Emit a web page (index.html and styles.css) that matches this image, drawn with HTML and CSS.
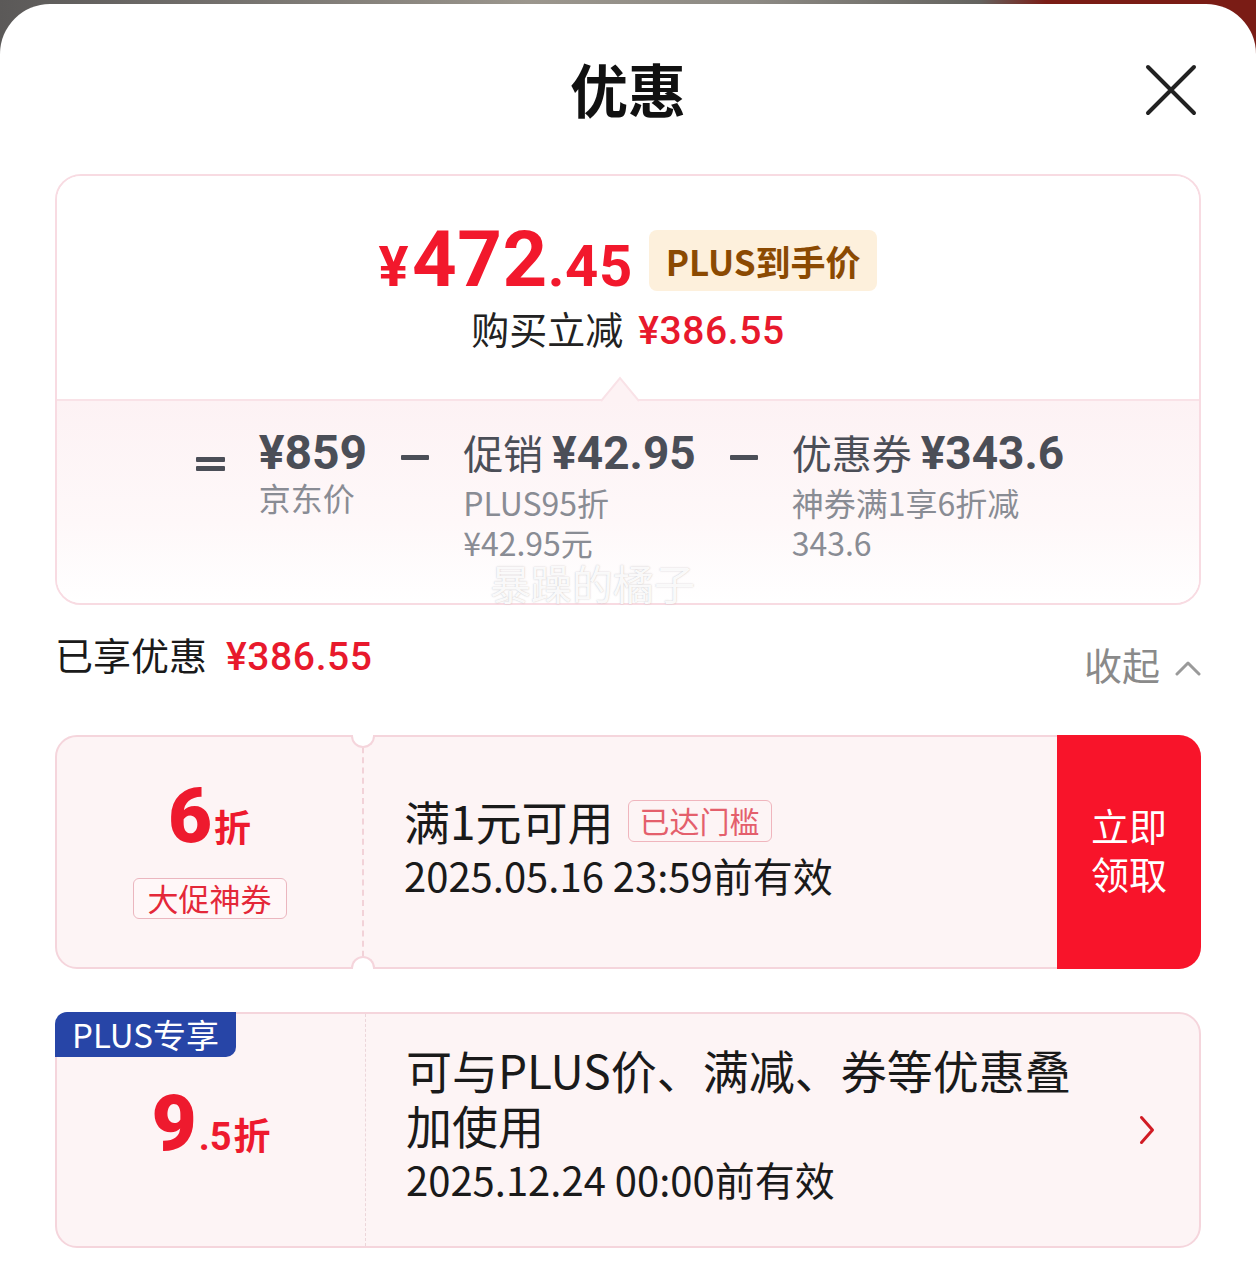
FILE: index.html
```html
<!DOCTYPE html>
<html lang="zh-CN">
<head>
<meta charset="utf-8">
<title>优惠</title>
<link rel="stylesheet" href="styles.css">
</head>
<body>
<div class="sheet">
  <header class="header">
    <span class="spacer"></span>
    <h1 class="title">优惠</h1>
    <button class="close" aria-label="关闭">
      <svg viewBox="0 0 52 52" width="52" height="52"><path d="M3 3 L49 49 M49 3 L3 49" stroke="#222" stroke-width="4" stroke-linecap="round" fill="none"/></svg>
    </button>
  </header>

  <section class="price-card">
    <div class="price-top">
      <div class="price-row">
        <span class="price"><span class="yen">¥</span><span class="int">472</span><span class="dec">.45</span></span>
        <span class="plus-badge">PLUS到手价</span>
      </div>
      <div class="save-row"><span class="save-label">购买立减</span><span class="save-val">¥386.55</span></div>
    </div>
    <div class="price-bottom">
      <svg class="notch" width="38" height="26" viewBox="0 0 38 26"><path d="M0 25 L19 2 L38 25" fill="#fdf2f4" stroke="#f9e2e7" stroke-width="2"/></svg>
      <div class="formula">
        <span class="op op-eq"><i></i><i></i></span>
        <div class="term">
          <div class="term-main"><b class="first-val">¥859</b></div>
          <div class="term-sub first">京东价</div>
        </div>
        <span class="op op-minus"><i></i></span>
        <div class="term">
          <div class="term-main">促销 <b>¥42.95</b></div>
          <div class="term-sub">PLUS95折<br>¥42.95元</div>
        </div>
        <span class="op op-minus"><i></i></span>
        <div class="term">
          <div class="term-main">优惠券 <b>¥343.6</b></div>
          <div class="term-sub">神券满1享6折减<br>343.6</div>
        </div>
      </div>
    </div>
  </section>

  <div class="enjoy-row">
    <div class="enjoy-left"><span>已享优惠</span><span class="enjoy-val">¥386.55</span></div>
    <div class="collapse">
      <span>收起</span>
      <svg width="26" height="16" viewBox="0 0 26 16"><path d="M2 14 L13 3 L24 14" stroke="#9a9a9a" stroke-width="3" fill="none" stroke-linecap="round" stroke-linejoin="round"/></svg>
    </div>
  </div>

  <div class="coupon coupon-one">
    <div class="c-left notched">
      <span class="notch-top"></span><span class="notch-bottom"></span>
      <div class="disc"><span class="disc-num">6</span><span class="disc-unit">折</span></div>
      <span class="c-tag">大促神券</span>
    </div>
    <div class="c-main">
      <div class="c-title">满1元可用<span class="c-badge">已达门槛</span></div>
      <div class="c-date">2025.05.16 23:59前有效</div>
    </div>
    <div class="c-btn">立即<br>领取</div>
  </div>

  <div class="coupon coupon-two">
    <span class="plus-tag">PLUS专享</span>
    <div class="c-left plain">
      <div class="disc"><span class="disc-num big">9</span><span class="disc-small">.5</span><span class="disc-unit">折</span></div>
    </div>
    <div class="c-main with-arrow">
      <div class="c-text">
        <div class="c-title">可与PLUS价、满减、券等优惠叠<br>加使用</div>
        <div class="c-date">2025.12.24 00:00前有效</div>
      </div>
      <svg class="arrow" width="16" height="30" viewBox="0 0 16 30"><path d="M2.5 2.5 L13.5 15 L2.5 27.5" stroke="#d11b24" stroke-width="3" fill="none" stroke-linecap="round" stroke-linejoin="round"/></svg>
    </div>
  </div>

  <span class="watermark">暴躁的橘子</span>
</div>
</body>
</html>
```

FILE: styles.css
```css
html, body {
  margin: 0;
  padding: 0;
}

body {
  background: linear-gradient(90deg, #5b5958 0%, #6f6c69 15%, #9b968d 42%, #8d8a84 60%, #64635f 78%, #7a1c15 83.3%, #7a1c15 100%);
  font-family: "Noto Sans CJK SC", "Noto Sans", sans-serif;
  color: #1a1a1a;
}

.sheet {
  position: relative;
  margin-top: 4px;
  min-height: 1268px;
  box-sizing: border-box;
  padding: 0 55px;
  background: #fff;
  border-radius: 50px 50px 0 0;
}

/* header */
.header {
  display: grid;
  grid-template-columns: 1fr auto 1fr;
  align-items: center;
  height: 170px;
}

.title {
  margin: 0 0 2px;
  font-size: 58px;
  font-weight: 700;
  line-height: 1;
  color: #111;
}

.close {
  justify-self: end;
  width: 52px;
  height: 52px;
  margin: 2px 4px 0 0;
  padding: 0;
  border: 0;
  background: none;
}

.close svg {
  display: block;
}

/* price card */
.price-card {
  border: 2px solid #f8dbe2;
  border-radius: 26px;
  overflow: hidden;
}

.price-top {
  display: flex;
  flex-direction: column;
  align-items: center;
  padding: 44px 0 44px;
  background: #fff;
}

.price-row {
  display: flex;
  align-items: center;
  gap: 16px;
  height: 80px;
}

.price {
  display: flex;
  align-items: baseline;
  font-family: Roboto, "Liberation Sans", sans-serif;
  font-weight: 700;
  color: #f2182c;
  line-height: 1;
  letter-spacing: 0.5px;
}

.yen {
  font-size: 56px;
  margin-right: 3px;
}

.int {
  font-size: 78px;
}

.dec {
  font-size: 58px;
}

.plus-badge {
  height: 61px;
  padding: 0 17px;
  border-radius: 8px;
  background: #fdf0dc;
  color: #8b4a02;
  font-size: 35px;
  font-weight: 700;
  line-height: 61px;
}

.save-row {
  display: flex;
  align-items: baseline;
  gap: 15px;
  margin-top: 4px;
  line-height: 48px;
}

.save-label {
  font-size: 38px;
  color: #222;
}

.save-val {
  font-family: Roboto, "Liberation Sans", sans-serif;
  font-size: 39px;
  font-weight: 500;
  letter-spacing: 0.6px;
  color: #e8192c;
}

.price-bottom {
  position: relative;
  border-top: 2px solid #f9e2e7;
  background: linear-gradient(180deg, #fdf2f4 0%, #fef8f9 60%, #ffffff 100%);
  padding: 28px 0 41px;
}

.notch {
  position: absolute;
  left: calc(50% - 27px);
  top: -25px;
  display: block;
}

.formula {
  display: flex;
  justify-content: center;
  align-items: flex-start;
  gap: 34px;
  color: #4b4e57;
  padding-left: 4px;
}

.op {
  display: flex;
  flex-direction: column;
  justify-content: center;
  gap: 4px;
  height: 46px;
}

.op i {
  display: block;
  height: 5px;
  background: #4b4e57;
  border-radius: 1px;
}

.op-eq {
  width: 29px;
  margin-top: 12px;
}

.op-minus {
  width: 28px;
  margin-top: 5px;
}

.term-main {
  font-size: 40px;
  line-height: 46px;
  white-space: nowrap;
  color: #4b4e57;
}

.term-main b {
  font-family: Roboto, "Liberation Sans", sans-serif;
  font-size: 46px;
  font-weight: 700;
}

.term-main b.first-val {
  font-size: 48px;
}

.term-sub {
  margin-top: 6px;
  font-size: 32px;
  line-height: 40px;
  color: #898c94;
  white-space: nowrap;
}

.term-sub.first {
  margin-top: 0;
  line-height: 42px;
}

/* enjoyed row */
.enjoy-row {
  display: flex;
  justify-content: space-between;
  align-items: flex-start;
  padding-top: 24px;
  margin-bottom: 46px;
}

.enjoy-left {
  display: flex;
  align-items: baseline;
  gap: 19px;
  font-size: 38px;
  line-height: 50px;
  color: #1a1a1a;
}

.enjoy-val {
  font-family: Roboto, "Liberation Sans", sans-serif;
  font-weight: 500;
  font-size: 39px;
  letter-spacing: 0.6px;
  color: #e8192c;
}

.collapse {
  display: flex;
  align-items: center;
  gap: 15px;
  padding-top: 10px;
  font-size: 38px;
  line-height: 50px;
  color: #8a8a8a;
}

.collapse svg {
  display: block;
  margin-top: 8px;
}

/* coupons */
.coupon {
  position: relative;
  display: flex;
  box-sizing: border-box;
  border: 2px solid #f5d5dc;
  border-radius: 22px;
  background: #fdf4f5;
}

.coupon-one {
  height: 234px;
}

.coupon-two {
  height: 236px;
  margin-top: 43px;
}

.c-left {
  position: relative;
  box-sizing: border-box;
  display: flex;
  flex-direction: column;
  align-items: center;
  justify-content: center;
  flex: none;
}

.c-left.notched {
  width: 307px;
  border-right: 2px dashed #f2d2d8;
}

.c-left.plain {
  width: 309px;
  border-right: 1px dashed #ecd6da;
}

.notch-top,
.notch-bottom {
  position: absolute;
  right: -13px;
  width: 24px;
  height: 13px;
  box-sizing: border-box;
  background: #fff;
  border: 2px solid #f5d5dc;
}

.notch-top {
  top: -2px;
  border-top: 0;
  border-radius: 0 0 12px 12px;
}

.notch-bottom {
  bottom: -2px;
  border-bottom: 0;
  border-radius: 12px 12px 0 0;
}

.disc {
  display: flex;
  align-items: baseline;
  color: #ee1a2e;
  font-weight: 700;
  line-height: 60px;
}

.disc-num {
  font-family: Roboto, "Liberation Sans", sans-serif;
  font-size: 76px;
  font-weight: 900;
}

.disc-num.big {
  font-size: 78px;
}

.disc-small {
  font-family: Roboto, "Liberation Sans", sans-serif;
  font-size: 38px;
  font-weight: 700;
  margin-left: 2px;
}

.disc-unit {
  font-size: 37px;
  font-weight: 700;
  margin-left: 2px;
}

.c-tag {
  margin-top: 22px;
  height: 41px;
  box-sizing: border-box;
  padding: 0 14px;
  border: 1.5px solid #ebb6bf;
  border-radius: 6px;
  background: #fff7f8;
  color: #e42839;
  font-size: 31px;
  line-height: 38px;
}

.c-main {
  flex: 1;
  display: flex;
  flex-direction: column;
  justify-content: center;
  padding-left: 40px;
  padding-bottom: 8px;
}

.c-main.with-arrow {
  flex-direction: row;
  align-items: center;
  padding-right: 44px;
  padding-bottom: 0;
}

.c-text {
  flex: 1;
  padding-bottom: 12px;
}

.arrow {
  flex: none;
  display: block;
  margin-left: 40px;
}

.c-title {
  display: flex;
  align-items: center;
  font-size: 46px;
  line-height: 55px;
  color: #1a1a1a;
}

.with-arrow .c-title {
  display: block;
}

.c-badge {
  margin-left: 14px;
  height: 42px;
  box-sizing: border-box;
  padding: 0 11px;
  border: 1.5px solid #f0b5bd;
  border-radius: 6px;
  color: #e45f6c;
  font-size: 30px;
  line-height: 39px;
}

.c-date {
  font-size: 40px;
  line-height: 55px;
  color: #1a1a1a;
}

.c-btn {
  flex: none;
  width: 144px;
  margin: -2px -2px -2px 0;
  padding-bottom: 6px;
  display: flex;
  align-items: center;
  justify-content: center;
  text-align: center;
  background: #f8142a;
  color: #fff;
  font-size: 38px;
  line-height: 48px;
  border-radius: 0 22px 22px 0;
}

.plus-tag {
  position: absolute;
  left: -2px;
  top: -2px;
  width: 181px;
  height: 45px;
  background: #2745a7;
  color: #fff;
  font-size: 33px;
  line-height: 45px;
  text-align: center;
  border-radius: 12px 0 10px 0;
  z-index: 1;
}

.watermark {
  position: absolute;
  left: 490px;
  top: 553px;
  font-size: 41px;
  line-height: 50px;
  color: rgba(255, 255, 255, 0.92);
  text-shadow: 0 0 1.5px rgba(120, 110, 115, 0.45);
  pointer-events: none;
}
```
